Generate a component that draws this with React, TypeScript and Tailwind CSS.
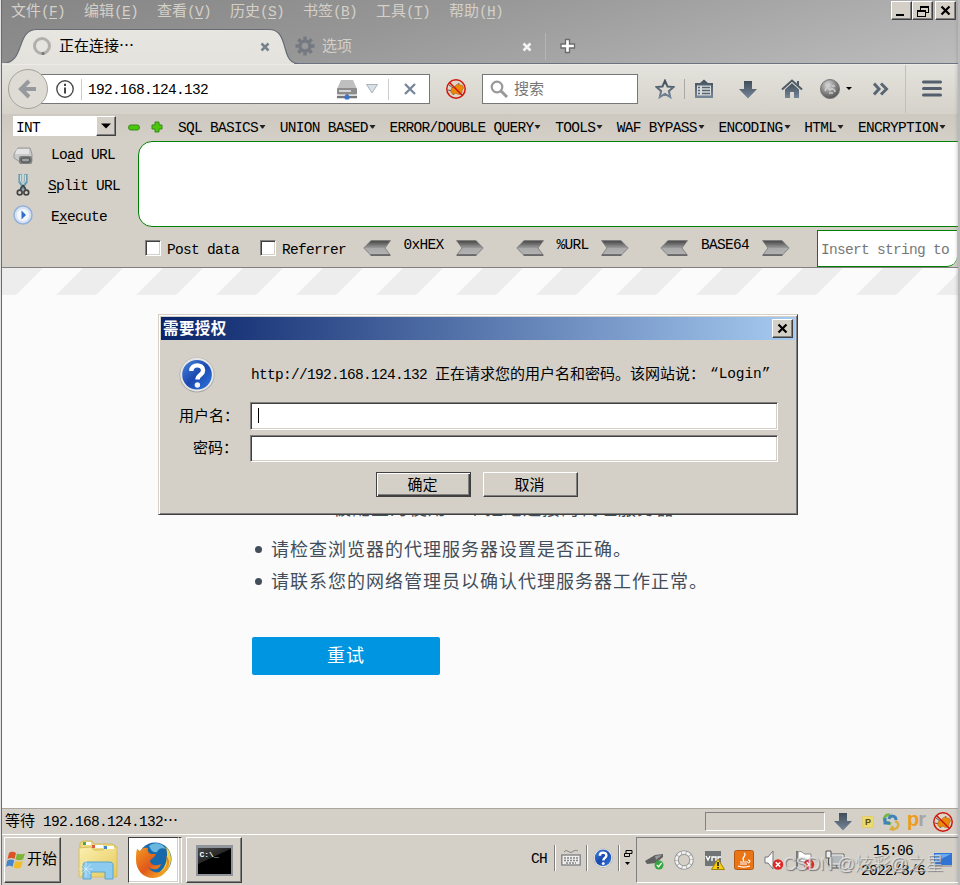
import React from "react";

const LATIN = "font-['Liberation_Mono','Noto_Sans_CJK_SC',monospace] text-[14.5px] tracking-[-0.7px]";
const CJK = "font-['Noto_Sans_CJK_SC',sans-serif] font-normal text-[15px] tracking-[0px]";

/** Sets latin runs on an 8px cell and Chinese runs on a 15px cell. */
function T({ children, className = "" }: { children: string; className?: string }) {
  const runs = children.match(/[\x00-\x7f]+|[^\x00-\x7f]+/g) || [];
  return (
    <span className={"whitespace-pre leading-[18px] " + className}>
      {runs.map((run, i) => (
        <span key={i} className={run.charCodeAt(0) < 128 ? LATIN : CJK}>{run}</span>
      ))}
    </span>
  );
}

function Key({ before, letter, after }: { before: string; letter: string; after: string }) {
  return (
    <span className="whitespace-pre leading-[18px]">
      <T>{before}</T>
      <span className={LATIN + " underline underline-offset-2"}>{letter}</span>
      <T>{after}</T>
    </span>
  );
}

const RAISED = "border border-t-white border-l-white border-r-[#404040] border-b-[#404040] bg-[#d4d0c8] shadow-[inset_-1px_-1px_0_#808080]";
const SUNKEN = "border border-t-[#808080] border-l-[#808080] border-r-white border-b-white bg-white shadow-[inset_1px_1px_0_#404040,inset_-1px_-1px_0_#d4d0c8]";

function Defs() {
  return (
    <svg width="0" height="0" className="absolute">
      <defs>
        <linearGradient id="steel" x1="0" y1="0" x2="0" y2="1">
          <stop offset="0" stopColor="#414d59" />
          <stop offset="1" stopColor="#76879a" />
        </linearGradient>
        <linearGradient id="chev" x1="0" y1="0" x2="0" y2="1">
          <stop offset="0" stopColor="#444" />
          <stop offset=".48" stopColor="#999" />
          <stop offset=".52" stopColor="#aaa" />
          <stop offset="1" stopColor="#b4b4b4" />
        </linearGradient>
        <linearGradient id="tab" x1="0" y1="0" x2="0" y2="1">
          <stop offset="0" stopColor="#e7e6e1" />
          <stop offset="1" stopColor="#e3e2dc" />
        </linearGradient>
        <radialGradient id="ball" cx=".4" cy=".3" r=".8">
          <stop offset="0" stopColor="#ddd" />
          <stop offset=".5" stopColor="#888" />
          <stop offset="1" stopColor="#444" />
        </radialGradient>
        <linearGradient id="blue" x1="0" y1="0" x2="1" y2="1">
          <stop offset="0" stopColor="#4a86dc" />
          <stop offset=".5" stopColor="#1a48b0" />
          <stop offset="1" stopColor="#2f78e0" />
        </linearGradient>
        <linearGradient id="folder" x1="0" y1="0" x2="1" y2="1">
          <stop offset="0" stopColor="#fbf0b0" />
          <stop offset="1" stopColor="#e6c95c" />
        </linearGradient>
        <linearGradient id="fox" x1="0" y1="0" x2="1" y2="1">
          <stop offset="0" stopColor="#f29a20" />
          <stop offset=".5" stopColor="#e2581a" />
          <stop offset="1" stopColor="#f7c52a" />
        </linearGradient>
      </defs>
    </svg>
  );
}

function WinGlyph({ kind }: { kind: "min" | "restore" | "close" }) {
  return (
    <svg width="20" height="18" viewBox="0 0 20 18" shapeRendering="crispEdges" fill="none" stroke="#000">
      {kind === "min" && <path d="M4 13h8" strokeWidth="2" />}
      {kind === "restore" && (
        <>
          <path d="M7.500 4v4M15.500 5v6M13 10.500h3" />
          <path d="M7 5h9" strokeWidth="2" />
          <path d="M4.500 8v6.500h8V8" />
          <path d="M4 9h9" strokeWidth="2" />
        </>
      )}
      {kind === "close" && <path d="M5.500 4.500l8 8M13.500 4.500l-8 8" strokeWidth="2.200" shapeRendering="auto" />}
    </svg>
  );
}

function Gear() {
  return (
    <svg width="20" height="20" viewBox="0 0 20 20">
      <g stroke="#757982" strokeWidth="3.400">
        <path d="M10 .5v19M.5 10h19M3.300 3.300l13.400 13.400M16.700 3.300L3.300 16.700" />
      </g>
      <circle cx="10" cy="10" r="6.600" fill="#757982" />
      <circle cx="10" cy="10" r="3.300" fill="#989898" />
    </svg>
  );
}

function NoBug() {
  return (
    <svg width="22" height="22" viewBox="0 0 22 22">
      <circle cx="11" cy="11" r="9.200" fill="#e0d6c8" />
      <path d="M4 7l4 3M3 12l4 1M14 5l-1 3M18 8l-3 2M8 17l1-2" stroke="#555" />
      <path d="M6 12c-1 4 3 5 5 3 3 3 7 1 6-3 3-2 1-5-2-5-2-2-5 0-5 2-2 0-4 1-4 3z" fill="#ea8a08" stroke="#a85c08" strokeWidth=".6" />
      <circle cx="11" cy="11" r="9.200" fill="none" stroke="#d0140c" strokeWidth="1.500" />
      <path d="M4.500 4.500l13 13" stroke="#d0140c" strokeWidth="1.500" />
    </svg>
  );
}

function Help({ size }: { size: number }) {
  return (
    <svg width={size} height={size} viewBox="0 0 36 36">
      <circle cx="18" cy="18" r="17.500" fill="#aaa9a5" />
      <circle cx="18" cy="17.600" r="16.800" fill="#e6e6e6" />
      <circle cx="18" cy="17.700" r="14.800" fill="url(#blue)" />
      <path d="M12.300 14c0-7.500 11.800-7.300 11.800-.6 0 4.400-5.600 4.600-5.600 9.200" fill="none" stroke="#fff" strokeWidth="4.400" />
      <circle cx="18.400" cy="28" r="2.700" fill="#f4f4f4" />
    </svg>
  );
}

function Caret() {
  return (
    <svg width="7" height="6" viewBox="0 0 7 6" className="ml-px -mt-px">
      <path d="M.5 1h6L4 4.500H3z" fill="#222" />
    </svg>
  );
}

function Chevron({ flip }: { flip?: boolean }) {
  return (
    <svg width="28" height="16" viewBox="0 0 28 16" className={flip ? "-scale-x-100" : ""}>
      <path d="M8 .6h19.500L22 8l5.500 7.400H8L.8 8z" fill="url(#chev)" stroke="#777" strokeWidth=".8" />
      <path d="M7.500 15H27" stroke="#5e5e5e" strokeWidth="1.500" />
    </svg>
  );
}

function TopChrome() {
  const menus: [string, string][] = [["文件", "F"], ["编辑", "E"], ["查看", "V"], ["历史", "S"], ["书签", "B"], ["工具", "T"], ["帮助", "H"]];
  return (
    <div className="h-16 flex flex-col bg-[linear-gradient(165deg,#858585_0%,#969696_40%,#a8a8a8_68%,#bdbdbd_100%)]">
      <div className="h-[28px] flex justify-between">
        <div className="flex pl-[9px] pt-px text-[#d4d0c8]">
          {menus.map(([name, key]) => (
            <div key={key} className="w-[73px] whitespace-nowrap leading-[18px] h-[18px]">
              <Key before={name + "("} letter={key} after=")" />
            </div>
          ))}
        </div>
        <div className="flex pt-px pr-[2px] h-5">
          <div className={"w-[21px] h-[19px] " + RAISED}><WinGlyph kind="min" /></div>
          <div className={"w-[21px] h-[19px] " + RAISED}><WinGlyph kind="restore" /></div>
          <div className={"w-[21px] h-[19px] ml-[2px] " + RAISED}><WinGlyph kind="close" /></div>
        </div>
      </div>
      <div className="h-9 relative flex border-b border-[#6d7283]">
        <svg width="300" height="36" className="absolute left-0 top-0">
          <path d="M0 35.500C24 35.500 13 1.500 35 1.500H267C288 1.500 278 35.500 296 35.500V36H0z" fill="url(#tab)" stroke="#666c76" strokeWidth="1.200" />
          <path d="M0 35.700h300" stroke="#e3e2dc" strokeWidth="1.600" strokeDasharray="292 8" />
        </svg>
        <div className="relative w-[290px] h-[36px] flex items-center pl-[30px] pr-[22px]">
          <svg width="20" height="20" viewBox="0 0 20 20" fill="none">
            <circle cx="10" cy="10" r="7.500" stroke="#b1b0ad" strokeWidth="3" />
            <circle cx="11" cy="17.500" r="1.600" fill="#777" />
          </svg>
          <T className="ml-[7px] -mt-[2px] flex-1">正在连接…</T>
          <svg width="10" height="10" viewBox="0 0 10 10" className="mt-[2px]"><path d="M1.500 1.500l7 7M8.500 1.500l-7 7" stroke="#78828a" strokeWidth="2.500" /></svg>
        </div>
        <div className="relative flex items-center w-[253px] h-[36px] pl-[3px]">
          <Gear />
          <T className="ml-[7px] -mt-[2px] flex-1 text-[#d4d0c8]">选项</T>
          <svg width="10" height="10" viewBox="0 0 10 10" className="mr-[13px] mt-[2px]"><path d="M1.500 1.500l7 7M8.500 1.500l-7 7" stroke="#f4f4f4" strokeWidth="2.500" /></svg>
        </div>
        <div className="w-px h-[27px] mt-[5px] bg-[#b5b5b5]" />
        <svg width="16" height="16" viewBox="0 0 16 16" className="mt-[10px] ml-[14px]">
          <path d="M5.500 1.500h4v4.500h5v4h-5v4.500h-4V10H1V6h4.500z" fill="#fff" stroke="#6b6b6b" strokeWidth="1.300" />
        </svg>
      </div>
    </div>
  );
}

function NavBar() {
  return (
    <div className="h-[50px] flex items-center bg-[linear-gradient(#e3e2dc,#d6d2ca)] border-t border-[#ecebe7] pb-px">
      <div className="z-10 ml-[6px] w-10 h-10 rounded-full border border-[#a6a39e] bg-[#dedbd4] flex items-center justify-center">
        <svg width="20" height="20" viewBox="0 0 20 20"><path d="M11 2L3 10l8 8M3.500 10H18" fill="none" stroke="#969a9e" strokeWidth="4" /></svg>
      </div>
      <div className="-ml-[7px] w-[389px] h-[30px] border border-[#777] bg-white flex items-center pl-[13px]">
        <svg width="20" height="20" viewBox="0 0 20 20">
          <circle cx="10" cy="10" r="8.200" fill="none" stroke="#4c4c4c" strokeWidth="1.400" />
          <path d="M10 8.500v6M10 4.800v2.200" stroke="#444" strokeWidth="2" />
        </svg>
        <div className="w-px h-[21px] ml-[6px] bg-[#ccc]" />
        <T className="ml-[6px] -mt-px flex-1">192.168.124.132</T>
        <svg width="22" height="21" viewBox="0 0 22 21">
          <path d="M5 1h12l4 9H1z" fill="#bfbfbf" />
          <rect x="1" y="9" width="20" height="6.500" rx="1" fill="#8c8c8c" />
          <path d="M3 12h12" stroke="#d5d5d5" strokeWidth="2" />
          <path d="M1 18h20M11 15v3" stroke="#777" strokeWidth="2.500" />
          <rect x="8.500" y="16" width="5" height="4.500" rx="1.500" fill="#3974d1" />
        </svg>
        <svg width="12" height="10" viewBox="0 0 12 10" className="ml-[8px]"><path d="M.5.500h11L6 9z" fill="#d9e0e5" stroke="#a9b4bb" /></svg>
        <div className="w-px h-[21px] ml-[10px] bg-[#ccc]" />
        <svg width="12" height="12" viewBox="0 0 12 12" className="ml-[15px] mr-[13px]"><path d="M1 1l10 10M11 1L1 11" stroke="#76859a" strokeWidth="2.300" /></svg>
      </div>
      <div className="ml-[15px] w-[22px]"><NoBug /></div>
      <div className="ml-[15px] w-[156px] h-[30px] border border-[#777] bg-white flex items-center pl-[7px] text-[#777]">
        <svg width="19" height="19" viewBox="0 0 19 19"><circle cx="7" cy="7" r="5.300" fill="none" stroke="#999" strokeWidth="2.200" /><path d="M11 11l6 6" stroke="#999" strokeWidth="3" /></svg>
        <T className="ml-[5px] -mt-[2px]">搜索</T>
      </div>
      <svg width="20" height="20" viewBox="0 0 20 20" className="ml-[17px]"><path d="M10 1.800l2.500 5.700 6 .6-4.600 4.100 1.400 6-5.300-3.200-5.300 3.200 1.400-6L1.500 8.100l6-.6z" fill="none" stroke="url(#steel)" strokeWidth="2" /></svg>
      <div className="w-px h-5 ml-[9px] bg-[#aaa8a3]" />
      <svg width="20" height="20" viewBox="0 0 20 20" className="ml-[9px]">
        <path d="M1 4h5l4-3.500L14 4h5v15H1z" fill="url(#steel)" />
        <path d="M3 6.500h14v10H3z" fill="#d9dcdc" />
        <path d="M4 8.500h2M8 8.500h8M4 11.500h2M8 11.500h8M4 14.500h2M8 14.500h8" stroke="#56636f" strokeWidth="1.500" />
      </svg>
      <svg width="18" height="19" viewBox="0 0 18 19" className="ml-[25px]"><path d="M5 1h8v8h5l-9 9.500L0 9h5z" fill="url(#steel)" /></svg>
      <svg width="22" height="20" viewBox="0 0 22 20" className="ml-[24px]">
        <path d="M1 10.500l10-9 10 9" fill="none" stroke="#4e5966" strokeWidth="2" />
        <path d="M4 10.500l7-6.300 7 6.300V19h-5v-6H9v6H4z" fill="url(#steel)" />
        <path d="M16 2h2v5l-2-2z" fill="#4e5966" />
      </svg>
      <svg width="20" height="20" viewBox="0 0 20 20" className="ml-[17px]">
        <circle cx="10" cy="10" r="9.500" fill="url(#ball)" stroke="#777" />
        <path d="M5 12c1-4 3-4 5-1 2-2 5-1 5 2M6 7c1-2 3-2 4 0M12 7h3M9 14h4" stroke="#ccc" strokeWidth="1.600" fill="none" />
      </svg>
      <svg width="6" height="4" viewBox="0 0 6 4" className="ml-[6px]"><path d="M0 0h6L3 3z" /></svg>
      <svg width="16" height="14" viewBox="0 0 16 14" className="ml-[21px]"><path d="M1 1.500l5 5.500-5 5.500M8 1.500l5.500 5.500L8 12.500" fill="none" stroke="#596674" strokeWidth="3" /></svg>
      <div className="w-px h-[48px] ml-[16px] bg-[#c3c0b9]" />
      <svg width="20" height="17" viewBox="0 0 20 17" className="ml-[16px] -mt-[2px]"><path d="M1.500 2h17M1.500 8.500h17M1.500 15h17" stroke="#535f6d" strokeWidth="3" strokeLinecap="round" /></svg>
    </div>
  );
}

function HackMenu() {
  const items = ["SQL BASICS", "UNION BASED", "ERROR/DOUBLE QUERY", "TOOLS", "WAF BYPASS", "ENCODING", "HTML", "ENCRYPTION"];
  return (
    <div className="h-[27px] flex items-center bg-[linear-gradient(#cdc9c1,#d4d0c8)] pl-[11px] pb-px">
      <div className="w-[103px] h-5 -mt-[2px] flex shrink-0 bg-white">
        <T className="flex-1 pl-[3px] pt-px">INT</T>
        <div className={"w-5 h-5 flex items-center justify-center " + RAISED}>
          <svg width="10" height="6" viewBox="0 0 10 6"><path d="M0 .5h10L5 5.500z" /></svg>
        </div>
      </div>
      <svg width="12" height="7" viewBox="0 0 12 7" className="ml-[12px] shrink-0"><rect x=".7" y="1" width="10.600" height="5" rx="2" fill="#4bc909" stroke="#36871a" /></svg>
      <svg width="12" height="12" viewBox="0 0 12 12" className="ml-[11px] mr-[15px] shrink-0"><path d="M4 1h4v3h3v4H8v3H4V8H1V4h3z" fill="#4bc909" stroke="#36871a" strokeLinejoin="round" /></svg>
      {items.map((item) => (
        <div key={item} className="flex items-center mr-[13.700px] shrink-0"><T className="-mt-px">{item}</T><Caret /></div>
      ))}
    </div>
  );
}

function Encoder({ label, wide }: { label: string; wide: string }) {
  return (
    <div className={"flex shrink-0 " + wide}>
      <Chevron />
      <T className="-mt-[6px] flex-1 text-center">{label}</T>
      <Chevron flip />
    </div>
  );
}

function HackBody() {
  return (
    <div className="h-[127px] flex overflow-hidden bg-[#d4d0c8] border-b border-[#808080]">
      <div className="w-[136px] shrink-0 flex flex-col">
        <div className="h-[29px] flex items-center pl-[11px]">
          <svg width="20" height="20" viewBox="0 0 20 20">
            <path d="M5 2h12l2 6v8H7l-6-4V8z" fill="#c9c9c9" stroke="#999" />
            <path d="M4 3h12v5H2z" fill="#e4e4e4" />
            <rect x="6" y="10" width="13" height="8" rx="2" fill="#7b7f80" />
            <rect x="8" y="12" width="9" height="4" rx="2" fill="#9da0a0" stroke="#444" />
          </svg>
          <span className="ml-[18px] -mt-[5px]"><Key before="Lo" letter="a" after="d URL" /></span>
        </div>
        <div className="h-[30px] flex items-center pl-[14px]">
          <svg width="14" height="24" viewBox="0 0 14 24" fill="none">
            <path d="M4 1v8l5 7M10 1v8l-5 7" stroke="#6a9db2" strokeWidth="3.200" />
            <path d="M4.500 2v6l3 4M9.500 2v6l-3 4" stroke="#c8e2ea" />
            <path d="M7 12l-3 5M7 12l3 5" stroke="#444" strokeWidth="1.500" />
            <circle cx="3.700" cy="19.500" r="2.400" stroke="#444" strokeWidth="1.700" /><circle cx="10.300" cy="19.500" r="2.400" stroke="#444" strokeWidth="1.700" />
          </svg>
          <span className="ml-[18px] -mt-[2px]"><Key before="" letter="S" after="plit URL" /></span>
        </div>
        <div className="h-[32px] flex items-center pl-[11px]">
          <svg width="20" height="20" viewBox="0 0 20 20" className="-mt-[2px]"><circle cx="10" cy="10" r="9" fill="#d9e5f4" stroke="#94b1d8" strokeWidth="1.500" /><circle cx="10" cy="10" r="6" fill="#f4f7fb" /><path d="M8.500 5.500l4.500 4.500-4.500 4.500z" fill="#2e70c8" /></svg>
          <span className="ml-[18px] -mt-[2px]"><Key before="E" letter="x" after="ecute" /></span>
        </div>
      </div>
      <div className="flex flex-col w-[840px] shrink-0">
        <div className="h-[86px] w-[840px] rounded-[14px] border border-[#008000] bg-white" />
        <div className="flex h-[40px]">
          <div className="flex pt-[13px] pl-[7px] w-[115px] pr-0 items-start"><div className={"w-[16px] h-[16px] shrink-0 " + SUNKEN} /><T className="ml-[6px] -mt-px">Post data</T></div>
          <div className="flex pt-[13px] pl-[7px] w-[104px] items-start"><div className={"w-[16px] h-[16px] shrink-0 " + SUNKEN} /><T className="ml-[6px] -mt-px">Referrer</T></div>
          <div className="flex pt-[13px] pl-[6px]">
            <Encoder label="0xHEX" wide="w-[121px] mr-[32px]" />
            <Encoder label="%URL" wide="w-[113px] mr-[31px]" />
            <Encoder label="BASE64" wide="w-[130px]" />
          </div>
          <div className="ml-[27px] mt-[3px] w-[140px] h-[37px] border border-r-0 rounded-br-[10px] border-[#008000] bg-white flex items-center pl-[3px] overflow-hidden text-[#777]">
            <T>Insert string to replace</T>
          </div>
        </div>
      </div>
    </div>
  );
}

function Page() {
  const rows = ["请检查浏览器的代理服务器设置是否正确。", "请联系您的网络管理员以确认代理服务器工作正常。"];
  return (
    <div className="h-[540px] bg-[#fbfbfb] flex flex-col font-['Noto_Sans_CJK_SC',sans-serif] font-normal text-[#424e5a]">
      <svg width="956" height="27" className="block">
        {Array.from({ length: 13 }, (_, i) => (
          <path key={i} transform={`translate(${i * 80 - 2} 0)`} d="M3 0h40L16 27h-40z" fill="#ededed" />
        ))}
      </svg>
      <div className="pl-[250px] pt-[199px] text-[18px] tracking-[1px] leading-[27px]">
        <p className="h-[36px] whitespace-nowrap"><span className="inline-block w-[81px] -translate-y-1">Firefox</span>被配置为使用一个拒绝连接的代理服务器</p>
        <ul className="pt-[2px]">
          {rows.map((row) => (
            <li key={row} className="h-8 flex items-center whitespace-nowrap"><span className="w-[7px] h-[7px] mt-[3px] ml-[3px] mr-[9px] rounded-full bg-[#424e5a]" />{row}</li>
          ))}
        </ul>
        <button className="block mt-[41px] w-[188px] h-[38px] pb-[3px] rounded-[2px] bg-[#0095e0] text-white tracking-[1px]">重试</button>
      </div>
    </div>
  );
}

function Dialog() {
  return (
    <div className="absolute left-[158px] top-[314px] w-[640px] h-[201px] bg-[#d4d0c8] border border-t-[#d4d0c8] border-l-[#d4d0c8] border-r-[#404040] border-b-[#404040] shadow-[inset_1px_1px_0_#fff,inset_-1px_-1px_0_#808080] p-[2px]">
      <div className="h-[23px] bg-[linear-gradient(90deg,#0a246a,#a6caf0)] flex items-center justify-between pl-[2px] pr-[2px]">
        <span className="font-['Noto_Sans_CJK_SC',sans-serif] font-bold text-[15.500px] leading-[20px] tracking-[0.400px] -mt-[3px] text-white">需要授权</span>
        <div className={"w-[21px] h-[19px] " + RAISED}><WinGlyph kind="close" /></div>
      </div>
      <div className="flex h-[62px] pl-[18px] pt-[17px]">
        <Help size={36} />
        <T className="ml-[36px] mt-[7px] tracking-normal">http://192.168.124.132 正在请求您的用户名和密码。该网站说：</T>
        <span className="ml-[5px] mt-[8px] leading-[18px] whitespace-nowrap font-['Liberation_Mono',monospace] text-[14.5px] tracking-[-0.1px]">“Login”</span>
      </div>
      <div className="flex h-[28px]">
        <div className="w-[89px] pl-[18px] pt-px whitespace-nowrap"><T>用户名：</T></div>
        <div className={"w-[528px] h-[28px] pl-[7px] pt-[5px] " + SUNKEN}><div className="w-px h-[15px] bg-black" /></div>
      </div>
      <div className="flex h-[28px] mt-[5px]">
        <div className="w-[89px] pl-[32px] whitespace-nowrap"><T>密码：</T></div>
        <div className={"w-[528px] h-[27px] " + SUNKEN} />
      </div>
      <div className="flex mt-[9px] pl-[215px] gap-[12px]">
        <button className="w-[95px] h-[25px] pb-[2px] pr-[2px] border border-[#404040] bg-[#d4d0c8] shadow-[inset_1px_1px_0_#fff,inset_-1px_-1px_0_#404040,inset_-2px_-2px_0_#808080] leading-[18px]"><T>确定</T></button>
        <button className={"w-[95px] h-[25px] pb-[2px] pr-[2px] leading-[18px] " + RAISED}><T>取消</T></button>
      </div>
    </div>
  );
}

function StatusBar() {
  return (
    <div className="h-[26px] flex items-center bg-[#d4d0c8] border-t border-[#aaa69e] pl-[3px]">
      <T className="w-[700px] -mt-px">等待 192.168.124.132…</T>
      <div className="w-[120px] h-[19px] border border-t-[#808080] border-l-[#808080] border-r-white border-b-white" />
      <svg width="18" height="18" viewBox="0 0 18 18" className="ml-[9px]"><path d="M5 0h8v8h5l-9 9.500L0 8h5z" fill="url(#steel)" /></svg>
      <div className="ml-[10px] w-[12px] h-[12px] bg-[#efd968] border border-[#e0cd75] font-['Liberation_Sans'] font-bold text-[9px] leading-[10px] text-center text-[#574d22]">P</div>
      <svg width="18" height="18" viewBox="0 0 18 18" className="ml-[8px]" fill="none">
        <path d="M8 2C4 1 1 5 3 8c2 3 4 2 6 3" stroke="#76b84f" strokeWidth="3" /><path d="M14 7c0-5-6-5-7-1M3 5v5h5" stroke="#3e84b7" strokeWidth="3" /><path d="M13 8c6 2 3 9-3 8M11 13l-2 3 3 1" stroke="#d9af42" strokeWidth="2.500" />
      </svg>
      <div className="ml-[7px] w-[19px] h-[25px] font-['Liberation_Sans'] font-bold text-[20px] leading-[20px] tracking-[-1px] text-[#f09a1a]">p<span className="text-[#a5a5a5]">r</span></div>
      <div className="ml-[6px]"><NoBug /></div>
    </div>
  );
}

function Sep() {
  return <div className="w-[2px] h-[26px] border-l border-[#808080] bg-white" />;
}

function ErrorBadge() {
  return (
    <>
      <circle cx="14" cy="14.500" r="5.200" fill="#df2929" />
      <path d="M11.800 12.300l4.400 4.400M16.200 12.300l-4.400 4.400" stroke="#fff" strokeWidth="1.600" />
    </>
  );
}

function TaskBar() {
  return (
    <div className="h-[51px] border-t border-white bg-[#d4d0c8] flex pt-[2px] pl-[2px]">
      <div className={"w-[57px] h-[46px] flex items-center pl-px shrink-0 " + RAISED}>
        <svg width="20" height="20" viewBox="0 0 20 20" className="shrink-0">
          <path d="M3 3c3-2 5-1 7 0L8.500 9c-2-1.500-4-1.500-7 0z" fill="#dc5426" />
          <path d="M11 3.500c3 1 5 1 8 0l-2 6c-3 1-5 1-7.500 0z" fill="#7db53a" />
          <path d="M1.200 10.500c3-1.500 5-1.500 7 0l-1.600 6.300c-2-1.500-4-1.500-6.600 0z" fill="#4585c9" />
          <path d="M9.300 11c3 1 5 1 7.500 0L15 17.500c-3 1.500-5 1.300-7.500 0z" fill="#f0bd28" />
        </svg>
        <T className="ml-px -mt-[4px]">开始</T>
      </div>
      <svg width="40" height="42" viewBox="0 0 40 42" className="ml-[17px] mt-[2px] shrink-0">
        <path d="M2 4l3-2h9l2 3h18l4 2v30H2z" fill="#edda82" stroke="#d2b860" />
        <path d="M5 3h8v3H5z" fill="#fff" /><path d="M5 3h3v3H5z" fill="#4aa94a" />
        <path d="M14 6h11v3H14z" fill="#fff" /><path d="M14 6h3v3h-3z" fill="#dd5b41" />
        <path d="M1 9l12-1 3 3h9l3-3h11v30H1z" fill="url(#folder)" stroke="#d8bf62" />
        <path d="M26 7h10v3H26z" fill="#fff" /><path d="M26 7h3v3h-3z" fill="#3c83d1" />
        <path d="M5 40V26c0-2 2-3 4-3h22c3 0 4 1 4 3v14h-8v-7H13v7z" fill="#8dcbee" stroke="#59a4cf" />
        <path d="M8 20v18M1 30h14M3 25l10 10M13 25L3 35" stroke="#fff" strokeOpacity=".45" />
      </svg>
      <div className="ml-[10px] w-[51px] h-[46px] shrink-0 border border-t-[#404040] border-l-[#404040] border-r-white border-b-white bg-white shadow-[inset_-1px_-1px_0_#d4d0c8] flex items-center justify-center">
        <svg width="38" height="38" viewBox="0 0 38 38">
          <circle cx="20" cy="18" r="16.500" fill="#1769ab" />
          <path d="M14 5c5-5 14-3 17 3-4-2-8 0-9 3-4 1-6-2-8-6z" fill="#69b7df" />
          <path d="M31 6c6 5 7 17 1 23-4 6-11 8-17 6 12-1 20-13 16-29z" fill="#f8cf38" />
          <path d="M2 8l3 2c2-3 5-4 8-3-1 2 0 5 3 6h5c-1 4-5 4-6 7 1 5 7 5 11 3-2 7-9 6-13 3 4 7 13 7 17 1 3-5 2-9 1-12 4 3 4 9 1 14-3 5-8 8-14 8C8 37 1 29 1 19c0-4 0-8 1-11z" fill="url(#fox)" />
        </svg>
      </div>
      <div className="w-[3px] h-[46px] border-r border-r-white border-t border-t-[#404040]" />
      <div className={"ml-[4px] w-[56px] h-[46px] shrink-0 flex items-center justify-center " + RAISED}>
        <div className="w-[37px] h-[31px] border-2 border-t-[3px] border-[#8f959a] bg-[linear-gradient(155deg,#4a4a4a_0%,#272727_38%,#000_40%)] text-white font-['Liberation_Mono'] text-[8px] font-bold leading-[13px] pl-[2px]">C:\_</div>
      </div>
      <div className="flex-1 flex justify-end h-[41px] items-center">
        <T>CH</T>
        <div className="ml-[7px] flex items-center">
          <Sep />
          <svg width="20" height="18" viewBox="0 0 20 18" className="mx-[5px]" fill="none" stroke="#858585">
            <path d="M3 3c3-4 5 2 8 0s4-2 6-1" /><rect x=".8" y="6" width="18.400" height="10" fill="#eee" strokeWidth="1.400" /><path d="M3 9h14M3 11.500h14M5 14h10" strokeWidth="1.500" strokeDasharray="2 1" />
          </svg>
          <Sep />
          <div className="mx-[5px]"><Help size={20} /></div>
          <Sep />
        </div>
        <svg width="10" height="18" viewBox="0 0 10 18" className="ml-[3px] mr-[3px]" fill="none" stroke="#000"><path d="M3 1.500h6v3H3zM1.500 4.500h5v3h-5z" fill="#d4d0c8" /><path d="M2 13h5L4.500 16z" fill="#000" stroke="none" /></svg>
      </div>
      <div className="w-[322px] h-[46px] relative border border-t-[#808080] border-l-[#808080] border-b-white border-r-0 flex items-center pl-[7px] shrink-0">
        <svg width="20" height="20" viewBox="0 0 20 20">
          <path d="M1 11l10-6 8-1v3l-7 6-9 1z" fill="#606060" /><path d="M11 6l7-1-6 5z" fill="#999" /><circle cx="15" cy="15" r="4.500" fill="#36a641" /><path d="M12.800 15l1.800 1.800 3-4" stroke="#fff" fill="none" strokeWidth="1.300" />
        </svg>
        <svg width="20" height="20" viewBox="0 0 20 20" className="ml-[10px]" fill="none"><circle cx="10" cy="10" r="7.500" stroke="#999" strokeWidth="4.600" /><circle cx="10" cy="10" r="7.500" stroke="#f4f4f4" strokeWidth="2.600" strokeDasharray="4 .7" /></svg>
        <svg width="21" height="20" viewBox="0 0 21 20" className="ml-[10px]"><path d="M1 1h16v15H1z" fill="#707477" /><path d="M2 6l2 4 2-4M8 11V7h4v4M14 11V7h3" stroke="#fff" strokeWidth="1.400" fill="none" /><path d="M14 9l6.500 10.500h-13z" fill="#f7cd13" stroke="#a28307" /><path d="M14 12v4M14 17v1.500" stroke="#222" strokeWidth="1.700" /></svg>
        <svg width="20" height="20" viewBox="0 0 20 20" className="ml-[9px]"><rect x=".5" y=".5" width="19" height="19" rx="2" fill="#e97517" stroke="#b6570f" /><path d="M10 3c4 3-4 4 0 8M6 12h8M6 14h7M4 16c5 2 9 1 12 0M14 10c3 0 2 3 0 3" stroke="#fff" fill="none" strokeWidth="1.200" /></svg>
        <svg width="20" height="20" viewBox="0 0 20 20" className="ml-[10px]"><path d="M1 7h3l5-6v18l-5-6H1z" fill="#fafafa" stroke="#777" /><ErrorBadge /></svg>
        <svg width="20" height="20" viewBox="0 0 20 20" className="ml-[11px]"><path d="M2 1v18" stroke="#777" strokeWidth="2" /><path d="M3 2c5-2 5 3 8 2h5v8h-7c-2 0-4-2-6 0z" fill="#fff" stroke="#888" /><ErrorBadge /></svg>
        <svg width="22" height="20" viewBox="0 0 22 20" className="ml-[9px]"><path d="M5 4h15v11H5z" fill="#b5b8ba" stroke="#666" /><path d="M6 5h13v9H6z" fill="none" stroke="#f4f4f4" /><path d="M8 18h9M12.500 15v3" stroke="#777" strokeWidth="1.500" /><path d="M2 1h5v7H2zM4.500 8v10" fill="#eee" stroke="#555" /></svg>
        <div className="ml-[15px] w-[64px] flex flex-col items-center leading-[18px]"><T>15:06</T><T>2022/8/6</T></div>
        <svg width="20" height="18" viewBox="0 0 20 18" className="ml-[8px]"><path d="M1 2h18v12H1z" fill="#2f73d5" /><path d="M2 3h16L2 11z" fill="#6ca8ef" /><path d="M1 15h18" stroke="#888" /></svg>
        <span className="absolute left-[146px] top-[14px] whitespace-nowrap font-['Liberation_Sans','Noto_Sans_CJK_SC',sans-serif] font-light text-[18px] leading-[24px] tracking-[-0.400px] text-[#e6e6e6]/80 [text-shadow:1px_1px_1px_#777]">CSDN @炫彩@之星</span>
      </div>
    </div>
  );
}

export default function App() {
  return (
    <div className="relative w-[960px] h-[885px] overflow-hidden flex text-black bg-[#d4d0c8]">
      <Defs />
      <div className="w-[2px] shrink-0 bg-[#e4e4e4] border-r border-[#666b73]" />
      <div className="w-[956px] shrink-0 overflow-hidden flex flex-col">
        <TopChrome />
        <NavBar />
        <HackMenu />
        <HackBody />
        <Page />
        <StatusBar />
        <TaskBar />
      </div>
      <div className="w-[2px] shrink-0 bg-[#b9b9b9] shadow-[-1px_0_3px_#8888]" />
      <Dialog />
    </div>
  );
}
